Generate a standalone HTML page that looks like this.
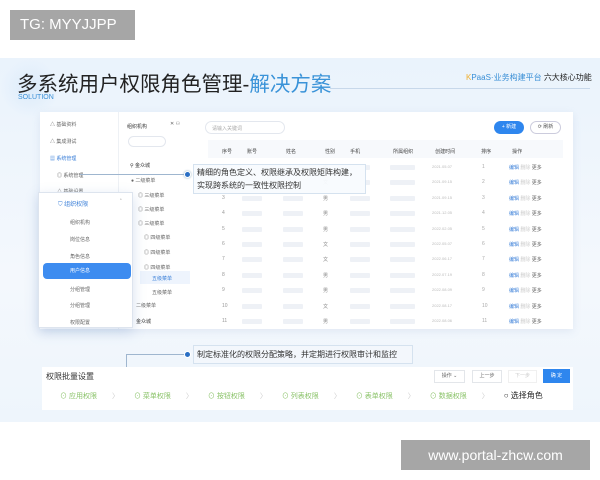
<!DOCTYPE html><html><head><meta charset="utf-8"><style>
*{margin:0;padding:0;box-sizing:border-box}
body{width:600px;height:480px;background:#fff;position:relative;overflow:hidden;font-family:"Liberation Sans","Noto Sans CJK SC",sans-serif}
.a{position:absolute;white-space:nowrap}
.s{font-size:5px;color:#666}
.g{background:#eef1f6;height:5px;border-radius:1px}
.c{color:#ccc;margin:0 15px}
</style></head><body>
<div class="a" style="left:10px;top:10px;width:125px;height:30px;background:#a6a6a6;color:#fff;font-size:15px;line-height:30px;padding-left:10px">TG: MYYJJPP</div>
<div class="a" style="left:0;top:58px;width:600px;height:364px;background:linear-gradient(180deg,#eaf3fc,#f4f8fd 60%,#eef5fc)"></div>
<div class="a" style="left:0;top:58px;width:60px;height:60px;border-radius:50%;background:radial-gradient(#dcebfa,transparent 70%)"></div>
<div class="a" style="left:17px;top:67px;font-size:20.5px;color:#222;letter-spacing:0">多系统用户权限角色管理-<span style="color:#3a93d8">解决方案</span></div>
<div class="a" style="left:18px;top:94px;font-size:7px;color:#3a8fd6">SOLUTION</div>
<div class="a" style="left:330px;top:88px;width:260px;height:1px;background:#c7d8ea"></div>
<div class="a" style="left:466px;top:72px;font-size:8px;color:#3a8fd6"><span style="color:#f0b030">K</span>PaaS·业务构建平台 <span style="color:#222">六大核心功能</span></div>
<div class="a" style="left:40px;top:112px;width:533px;height:217px;background:#fff;box-shadow:0 2px 8px rgba(120,150,190,.15)"></div>
<div class="a" style="left:118px;top:112px;width:1px;height:217px;background:#eef1f5"></div>
<div class="a s" style="left:50px;top:121px">△ 基础资料</div><div class="a s" style="left:50px;top:138px">△ 集成测试</div>
<div class="a s" style="left:50px;top:155px;color:#3a7fd8">▦ 系统管理</div>
<div class="a s" style="left:57px;top:172px">◎ 系统管理</div><div class="a s" style="left:57px;top:188px">△ 基础设置</div>
<div class="a s" style="left:127px;top:123px;color:#333">组织机构</div><div class="a s" style="left:170px;top:121px">✕ ⚇</div>
<div class="a" style="left:128px;top:136px;width:38px;height:11px;border:1px solid #e3e7ee;border-radius:6px"></div>
<div class="a s" style="left:130px;top:162px;color:#333">⚲ 金众城</div>
<div class="a s" style="left:131px;top:177px">● 二级菜单</div><div class="a s" style="left:138px;top:192px">◎ 三级菜单</div><div class="a s" style="left:138px;top:206px">◎ 三级菜单</div><div class="a s" style="left:138px;top:220px">◎ 三级菜单</div><div class="a s" style="left:144px;top:234px">◎ 四级菜单</div><div class="a s" style="left:144px;top:249px">◎ 四级菜单</div><div class="a s" style="left:144px;top:264px">◎ 四级菜单</div>
<div class="a" style="left:140px;top:271px;width:50px;height:13px;background:#eef4fd"></div>
<div class="a s" style="left:152px;top:275px;color:#3a7fd8">五级菜单</div><div class="a s" style="left:152px;top:289px">五级菜单</div>
<div class="a s" style="left:136px;top:302px">二级菜单</div><div class="a s" style="left:136px;top:318px;color:#333">金众城</div>
<div class="a" style="left:205px;top:121px;width:80px;height:13px;border:1px solid #e3e7ee;border-radius:7px"></div>
<div class="a s" style="left:212px;top:125px;color:#aaa">请输入关键词</div>
<div class="a" style="left:494px;top:121px;width:30px;height:13px;background:#2e86ee;border-radius:7px;color:#fff;font-size:5px;line-height:13px;text-align:center">+ 新建</div>
<div class="a" style="left:530px;top:121px;width:31px;height:13px;border:1px solid #ccd;border-radius:7px;font-size:5px;line-height:11px;text-align:center;color:#555">⟳ 刷新</div>
<div class="a" style="left:208px;top:140px;width:355px;height:182px;background:linear-gradient(#f7f9fc 0 18px,#fff 18px)"></div>
<div class="a s" style="top:148px;left:222px;width:350px;color:#444">序号<span style="margin-left:15px">账号</span><span style="margin-left:29px">姓名</span><span style="margin-left:29px">性别</span><span style="margin-left:15px">手机</span><span style="margin-left:33px">所属组织</span><span style="margin-left:22px">创建时间</span><span style="margin-left:26px">排序</span><span style="margin-left:21px">操作</span></div>
<div id="rows"></div>
<script>
var d=["2021.05.07","2021.09.15","2021.09.15","2021.12.05","2022.02.05","2022.05.07","2022.06.17","2022.07.19","2022.08.09","2022.08.17","2022.08.06"],sx="男文男男男文文男男文男",h="";
for(var i=0;i<11;i++){var y=164+i*15.4;h+='<div class="a s" style="left:222px;top:'+y+'px;color:#999">'+(i+1)+'</div><div class="a g" style="left:242px;top:'+(y+1)+'px;width:20px"></div><div class="a g" style="left:283px;top:'+(y+1)+'px;width:20px"></div><div class="a s" style="left:323px;top:'+y+'px;color:#888">'+sx[i]+'</div><div class="a g" style="left:350px;top:'+(y+1)+'px;width:20px"></div><div class="a g" style="left:390px;top:'+(y+1)+'px;width:25px"></div><div class="a s" style="left:432px;top:'+y+'px;color:#bbb;font-size:4px">'+d[i]+'</div><div class="a s" style="left:482px;top:'+y+'px;color:#aaa">'+(i+1)+'</div><div class="a s" style="left:509px;top:'+y+'px;color:#3a7fd8">编辑 <span style="color:#ccc">删除</span> <span style="color:#666">更多</span></div>';}
document.getElementById('rows').innerHTML=h;
</script>
<div class="a" style="left:38px;top:192px;width:95px;height:136px;background:#fff;border:1px solid #dde4ee;box-shadow:0 4px 12px rgba(90,130,190,.25)"></div>
<div class="a" style="left:58px;top:199px;font-size:6px;color:#3a7fd8">⛉ 组织权限</div><div class="a s" style="left:120px;top:199px">ˆ</div>
<div class="a s" style="left:70px;top:219px">组织机构</div><div class="a s" style="left:70px;top:236px">岗位信息</div><div class="a s" style="left:70px;top:253px">角色信息</div>
<div class="a" style="left:43px;top:263px;width:88px;height:16px;background:#3d8cf0;border-radius:4px;color:#fff;font-size:5px;line-height:16px;padding-left:27px">用户信息</div>
<div class="a s" style="left:70px;top:286px">分组管理</div><div class="a s" style="left:70px;top:302px">分组管理</div><div class="a s" style="left:70px;top:319px">权限配置</div>
<div class="a" style="left:80px;top:174px;width:108px;height:1px;background:#9fb6cf"></div>
<div class="a" style="left:184px;top:171px;width:7px;height:7px;border-radius:50%;background:#2a6fc4;border:1.5px solid #fff;box-shadow:0 0 2px #8ab"></div>
<div class="a" style="left:193px;top:164px;width:173px;height:30px;background:rgba(248,251,254,.95);border:1px solid #d5e2ef;font-size:8px;line-height:13px;color:#333;padding:1px 3px">精细的角色定义、权限继承及权限矩阵构建，<br>实现跨系统的一致性权限控制</div>
<div class="a" style="left:126px;top:354px;width:62px;height:1px;background:#9fb6cf"></div>
<div class="a" style="left:126px;top:354px;width:1px;height:13px;background:#9fb6cf"></div>
<div class="a" style="left:184px;top:351px;width:7px;height:7px;border-radius:50%;background:#2a6fc4;border:1.5px solid #fff"></div>
<div class="a" style="left:193px;top:345px;width:220px;height:19px;background:#f3f7fc;border:1px solid #d5e2ef;font-size:8px;line-height:17px;color:#333;padding-left:3px">制定标准化的权限分配策略，并定期进行权限审计和监控</div>
<div class="a" style="left:42px;top:367px;width:531px;height:43px;background:#fff"></div>
<div class="a" style="left:46px;top:371px;font-size:8px;color:#333">权限批量设置</div>
<div class="a s" style="left:434px;top:370px;width:31px;height:13px;border:1px solid #e3e6ea;line-height:11px;text-align:center">操作 ⌄</div>
<div class="a s" style="left:472px;top:370px;width:30px;height:13px;border:1px solid #e3e6ea;line-height:11px;text-align:center">上一步</div>
<div class="a s" style="left:508px;top:370px;width:29px;height:13px;border:1px solid #f0f0f0;line-height:11px;text-align:center;color:#ccc">下一步</div>
<div class="a" style="left:543px;top:369px;width:27px;height:14px;background:#2e86ee;color:#fff;font-size:5px;line-height:14px;text-align:center">确 定</div>
<div class="a" style="left:60px;top:390px;font-size:7px;color:#8bc36a">⊙ 应用权限<span class="c">〉</span>⊙ 菜单权限<span class="c">〉</span>⊙ 按钮权限<span class="c">〉</span>⊙ 列表权限<span class="c">〉</span>⊙ 表单权限<span class="c">〉</span>⊙ 数据权限<span class="c">〉</span><span style="color:#222;font-size:8px">○ 选择角色</span></div>
<div class="a" style="left:401px;top:440px;width:189px;height:30px;background:#a6a6a6;color:#fff;font-size:14px;line-height:30px;text-align:center">www.portal-zhcw.com</div>
</body></html>
